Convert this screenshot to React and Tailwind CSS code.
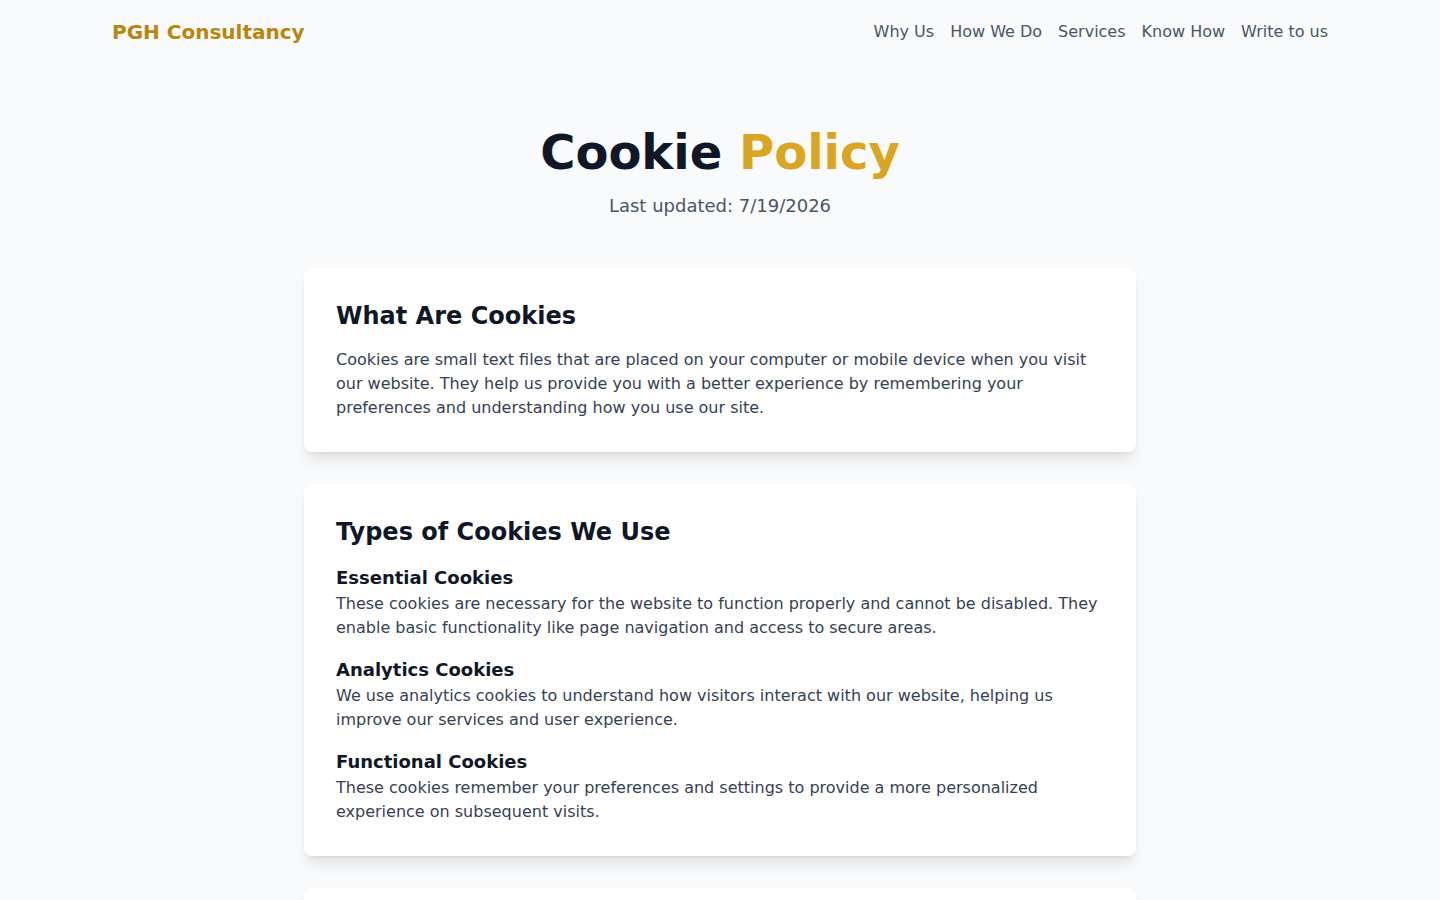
import React from "react";

const font = { fontFamily: '"DejaVu Sans", Verdana, sans-serif' };

function Card({ children }) {
  return (
    <section className="bg-white rounded-lg shadow-lg p-8 mb-8">{children}</section>
  );
}

function Sub({ title, children }) {
  return (
    <div>
      <h3 className="text-lg font-semibold text-gray-900">{title}</h3>
      <p className="text-base text-gray-700">{children}</p>
    </div>
  );
}

export default function App() {
  return (
    <div className="min-h-screen bg-gray-50 font-['DejaVu_Sans',sans-serif]" style={font}>
      <header className="max-w-7xl mx-auto px-8 h-16 flex items-center justify-between">
        <div className="text-xl font-bold text-[#B8860B]">PGH Consultancy</div>
        <nav className="flex items-center gap-4 text-base text-gray-600">
          <a>Why Us</a>
          <a>How We Do</a>
          <a>Services</a>
          <a>Know How</a>
          <a>Write to us</a>
        </nav>
      </header>

      <main className="max-w-4xl mx-auto px-8 pt-16 pb-16">
        <div className="text-center mb-12">
          <h1 className="text-5xl font-bold text-gray-900 leading-none mb-4">
            Cookie <span className="text-[#DAA520]">Policy</span>
          </h1>
          <p className="text-lg text-gray-600">Last updated: 7/19/2026</p>
        </div>

        <Card>
          <h2 className="text-2xl font-bold text-gray-900 mb-4">What Are Cookies</h2>
          <p className="text-base text-gray-700">
            Cookies are small text files that are placed on your computer or mobile device when you visit
            our website. They help us provide you with a better experience by remembering your
            preferences and understanding how you use our site.
          </p>
        </Card>

        <Card>
          <h2 className="text-2xl font-bold text-gray-900 mb-4">Types of Cookies We Use</h2>
          <div className="flex flex-col gap-4">
            <Sub title="Essential Cookies">
              These cookies are necessary for the website to function properly and cannot be disabled. They
              enable basic functionality like page navigation and access to secure areas.
            </Sub>
            <Sub title="Analytics Cookies">
              We use analytics cookies to understand how visitors interact with our website, helping us
              improve our services and user experience.
            </Sub>
            <Sub title="Functional Cookies">
              These cookies remember your preferences and settings to provide a more personalized
              experience on subsequent visits.
            </Sub>
          </div>
        </Card>

        <Card>
          <h2 className="text-2xl font-bold text-gray-900 mb-4">Managing Cookies</h2>
          <p className="text-base text-gray-700">
            You can control and manage cookies through your browser settings. Please note that disabling
            certain cookies may affect the functionality of our website.
          </p>
        </Card>
      </main>
    </div>
  );
}
